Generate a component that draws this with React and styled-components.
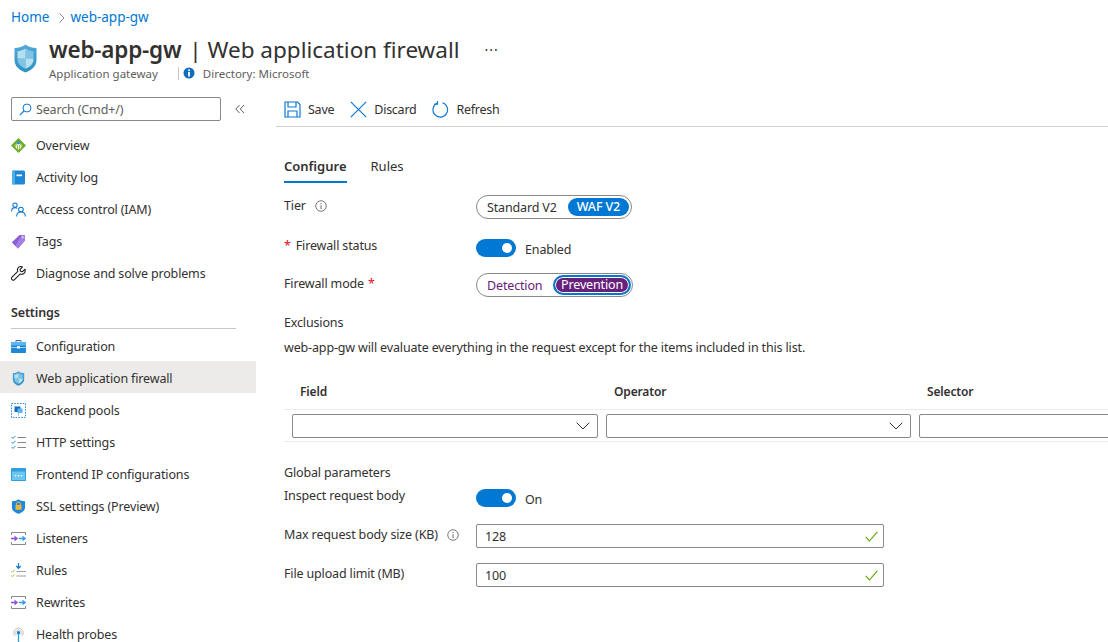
import React from "react";
import styled, { createGlobalStyle } from "styled-components";

const GlobalStyle = createGlobalStyle`
  * { box-sizing: border-box; }
  html, body { margin: 0; padding: 0; background: #fff; }
  body {
    width: 1108px;
    height: 642px;
    overflow: hidden;
    font-family: "Noto Sans", "Open Sans", Arial, sans-serif;
    font-size: 12.5px;
    letter-spacing: -0.15px;
    color: #323130;
  }
`;

const Page = styled.div`
  width: 1108px;
  height: 642px;
  overflow: hidden;
  display: flex;
  flex-direction: column;
`;

const Breadcrumb = styled.div`
  height: 35px;
  padding: 9px 0 0 11px;
  display: flex;
  align-items: flex-start;
  font-size: 13.5px;
  line-height: 17px;
  letter-spacing: 0;
  color: #0078d4;
`;
const Crumb = styled.span`
  color: #0078d4;
`;
const CrumbSep = styled.svg`
  width: 8px;
  height: 10px;
  margin: 4px 4px 0 9px;
`;

const Header = styled.div`
  height: 53px;
  padding-left: 14px;
  display: flex;
  align-items: flex-start;
`;
const HeaderIcon = styled.svg`
  width: 23px;
  height: 29px;
  margin: 9px 12px 0 0;
  flex: none;
`;
const TitleBlock = styled.div`
  display: flex;
  flex-direction: column;
`;
const TitleRow = styled.div`
  display: flex;
  align-items: flex-start;
`;
const Title = styled.h1`
  margin: 0;
  font-size: 22.5px;
  line-height: 30px;
  font-weight: 400;
  letter-spacing: 0;
  color: #323130;
  white-space: nowrap;
  b {
    font-weight: 600;
    letter-spacing: -0.2px;
    margin-right: 2px;
  }
`;
const More = styled.span`
  margin: 3px 0 0 25px;
  font-size: 14px;
  line-height: 24px;
  letter-spacing: 1px;
  color: #323130;
`;
const Sub = styled.div`
  display: flex;
  align-items: center;
  height: 16px;
  font-size: 11.5px;
  letter-spacing: 0;
  color: #605e5c;
`;
const SubDivider = styled.span`
  width: 1px;
  height: 13px;
  background: #c8c6c4;
  margin: 0 4px 0 20px;
`;
const InfoDot = styled.svg`
  width: 12px;
  height: 12px;
  margin: 0 8px 0 0;
`;

const Body = styled.div`
  flex: 1;
  display: flex;
  min-height: 0;
`;

const Sidebar = styled.aside`
  width: 256px;
  flex: none;
  margin-right: 20px;
  display: flex;
  flex-direction: column;
`;
const SearchRow = styled.div`
  display: flex;
  flex: none;
  align-items: center;
  height: 24px;
  margin: 9px 0 8px 11px;
`;
const SearchBox = styled.div`
  width: 210px;
  height: 24px;
  border: 1px solid #8a8886;
  border-radius: 2px;
  display: flex;
  align-items: center;
  padding-left: 7px;
  color: #605e5c;
  svg {
    width: 13px;
    height: 13px;
    margin-right: 4px;
  }
`;
const Collapse = styled.svg`
  width: 10px;
  height: 10px;
  margin-left: 14px;
`;
const NavItem = styled.div`
  flex: none;
  height: 32px;
  padding: ${(p) => (p.$low ? 3 : 1)}px 0 0 11px;
  display: flex;
  align-items: center;
  background: ${(p) => (p.$active ? "#edebe9" : "transparent")};
  color: #323130;
  white-space: nowrap;
  svg {
    width: 15px;
    height: 15px;
    margin-right: 10px;
    flex: none;
  }
`;
const NavHeading = styled.div`
  flex: none;
  margin: 15px 20px 0 11px;
  height: 25px;
  line-height: 18px;
  font-weight: 600;
  border-bottom: 1px solid #c8c6c4;
`;

const Main = styled.main`
  flex: 1;
  min-width: 0;
  display: flex;
  flex-direction: column;
`;
const Toolbar = styled.div`
  height: 39px;
  padding: 0 0 0 8px;
  border-bottom: 1px solid #d2d0ce;
  display: flex;
  align-items: flex-start;
  letter-spacing: -0.25px;
`;
const ToolButton = styled.div`
  display: flex;
  align-items: center;
  height: 24px;
  margin: 9px 16px 0 0;
  color: #323130;
  svg {
    width: 17px;
    height: 17px;
    margin-right: 7px;
  }
`;
const Content = styled.div`
  padding: 26px 0 0 8px;
`;
const Tabs = styled.div`
  display: flex;
  gap: 24px;
  height: 30px;
`;
const Tab = styled.div`
  height: 30px;
  line-height: 26px;
  font-size: 13px;
  letter-spacing: 0;
  font-weight: ${(p) => (p.$active ? 600 : 400)};
  border-bottom: ${(p) => (p.$active ? "2px solid #0078d4" : "none")};
  color: #323130;
`;
const FormRow = styled.div`
  display: grid;
  grid-template-columns: 192px 1fr;
  height: ${(p) => p.$h}px;
  margin-top: ${(p) => p.$mt || 0}px;
`;
const Label = styled.div`
  display: flex;
  align-items: flex-start;
  line-height: 18px;
  margin-top: ${(p) => p.$mt || 0}px;
  white-space: nowrap;
  svg {
    width: 12px;
    height: 12px;
    margin: 3px 0 0 9px;
  }
`;
const Req = styled.span`
  color: #e00b1c;
  margin: ${(p) => (p.$before ? "0 5px 0 0" : "0 0 0 4px")};
`;
const Segmented = styled.div`
  display: inline-flex;
  align-items: center;
  width: ${(p) => p.$w}px;
  height: 24px;
  border: 1px solid #8a8886;
  border-radius: 12px;
  padding: 0 1px 0 10px;
  justify-content: space-between;
  color: ${(p) => p.$color};
`;
const SegActive = styled.span`
  height: 18px;
  line-height: 17px;
  padding: 0 9px;
  margin-right: 1px;
  border-radius: 9px;
  background: #0078d4;
  color: #fff;
  font-weight: 500;
`;
const SegFocused = styled.span`
  height: 20px;
  line-height: 16px;
  padding: 0 6px;
  border-radius: 10px;
  background: #68217a;
  color: #fff;
  border: 2px solid #0078d4;
  box-shadow: inset 0 0 0 1px #fff;
`;
const ToggleWrap = styled.div`
  display: flex;
  align-items: flex-start;
`;
const Toggle = styled.span`
  width: 40px;
  height: 18px;
  border-radius: 9px;
  background: #0078d4;
  display: flex;
  align-items: center;
  justify-content: flex-end;
  padding-right: 4px;
  &::after {
    content: "";
    width: 10px;
    height: 10px;
    border-radius: 50%;
    background: #fff;
  }
`;
const ToggleText = styled.span`
  margin: 2px 0 0 9px;
  line-height: 18px;
`;
const SectionTitle = styled.div`
  line-height: 18px;
  margin-top: ${(p) => p.$mt}px;
`;
const Desc = styled.div`
  line-height: 18px;
  margin-top: 7px;
  white-space: nowrap;
`;
const ColHeads = styled.div`
  display: grid;
  grid-template-columns: 314px 313px 1fr;
  height: 27px;
  margin-top: 26px;
  padding: 0 0 0 16px;
  font-weight: 600;
  font-size: 12px;
  line-height: 18px;
  border-bottom: 1px solid #edebe9;
  white-space: nowrap;
`;
const FilterRow = styled.div`
  display: flex;
  gap: 8px;
  height: 32px;
  padding: 4px 0 0 8px;
  border-bottom: 1px solid #edebe9;
  overflow: hidden;
`;
const Select = styled.div`
  flex: none;
  width: ${(p) => p.$w}px;
  height: 24px;
  border: 1px solid #8a8886;
  border-radius: 2px;
  display: flex;
  align-items: center;
  justify-content: flex-end;
  padding-right: 7px;
  svg {
    width: 14px;
    height: 8px;
  }
`;
const Input = styled.div`
  width: 408px;
  height: 24px;
  border: 1px solid #8a8886;
  border-radius: 2px;
  display: flex;
  align-items: center;
  justify-content: space-between;
  padding: 0 5px 0 8px;
  svg {
    width: 13px;
    height: 11px;
  }
`;

const ChevronDown = () => (
  <svg viewBox="0 0 14 8">
    <path d="M.7.7 7 7l6.3-6.3" fill="none" stroke="#323130" strokeWidth="1" />
  </svg>
);

const Check = () => (
  <svg viewBox="0 0 13 11">
    <path d="M.8 5.8 4.4 10 12.3.8" fill="none" stroke="#57a300" strokeWidth="1.1" />
  </svg>
);

const InfoCircle = () => (
  <svg viewBox="0 0 13 13">
    <circle cx="6.5" cy="6.5" r="5.7" fill="none" stroke="#605e5c" strokeWidth=".9" />
    <circle cx="6.5" cy="3.9" r=".75" fill="#605e5c" />
    <path d="M6.5 5.7v4.2" stroke="#605e5c" strokeWidth="1" />
  </svg>
);

const ShieldBase = ({ id }) => (
  <>
    <defs>
      <linearGradient id={id} x1="0" y1="0" x2="0" y2="1">
        <stop offset="0" stopColor="#4fa9d9" />
        <stop offset="1" stopColor="#2f8fc4" />
      </linearGradient>
    </defs>
    <path d="M11.5.5C14 2.6 17.8 3.900 22.5 4v12c0 6.300-5 10.300-11 12.500C5.500 26.300.5 22.300.5 16V4C5.200 3.900 9 2.600 11.500.5z" fill={`url(#${id})`} />
    <path d="M11.500 4.500C13.800 6 16.500 7 19.500 7.300v7.200h-8zM11.500 14.500v10.300C7.500 23 3.500 20.300 3.500 15.500v-1z" fill="#7fc4e4" />
    <path d="M11.500 4.500v10h-8V7.300C6.500 7 9.200 6 11.500 4.500zM11.500 14.500h8v1c0 4.800-4 7.500-8 9.300z" fill="#b6dff0" />
  </>
);

const OverviewIcon = () => (
  <svg viewBox="0 0 15 15">
    <path d="M7.500 0 15 7.500 7.500 15 0 7.500z" fill="#6fa92c" />
    <path d="M7.500 3 12 7.500 7.500 12 3 7.500z" fill="#9ccb50" />
    <path d="M7.500 5v6.500M5.300 10.500V7.500L7.500 5.500l2.200 2v3" fill="none" stroke="#fff" strokeWidth="1" />
    <circle cx="7.500" cy="4.800" r="1.600" fill="#2f8fd8" />
  </svg>
);
const ActivityIcon = () => (
  <svg viewBox="0 0 15 15">
    <rect x="1" y=".5" width="13" height="14" rx="1.500" fill="#1e88d6" />
    <rect x="1" y=".5" width="3" height="14" rx="1" fill="#50b0ec" />
    <rect x="5.500" y="4.500" width="5.500" height="1.700" fill="#fff" />
  </svg>
);
const AccessIcon = () => (
  <svg viewBox="0 0 16 16">
    <g fill="none" stroke="#0f78d4" strokeWidth="1.100">
      <circle cx="4.300" cy="3.300" r="2.300" />
      <path d="M.6 10c0-2.500 1.500-4 3.700-4 1 0 1.800.3 2.400.8" />
      <circle cx="10.600" cy="8" r="2.500" />
      <path d="M6 15.500c0-3 2-4.800 4.600-4.800s4.700 1.800 4.700 4.800" />
    </g>
  </svg>
);
const TagIcon = () => (
  <svg viewBox="0 0 15 15">
    <path d="M8.500 1H14v5.500L7 14.500.8 8.500z" fill="#8a5cd6" />
    <path d="M10.500 1H14v5.500L7 14.500 4.500 12z" fill="#a67fe4" />
    <circle cx="11.700" cy="3.300" r="1" fill="#e6dcfa" />
  </svg>
);
const WrenchIcon = () => (
  <svg viewBox="0 0 15 15">
    <path
      d="M14 3.200 11.500 5.600 9.500 5.200 9 3.300 11.500.9C9.500.2 7.700.8 6.900 2.200c-.6 1-.6 2.200-.1 3.200L1 11.200c-.7.700-.7 1.800 0 2.500s1.800.7 2.500 0l5.800-5.800c1 .5 2.300.4 3.300-.2 1.300-.9 1.900-2.700 1.400-4.500z"
      fill="none"
      stroke="#201f1e"
      strokeWidth="1.100"
      strokeLinejoin="round"
    />
  </svg>
);
const ConfigIcon = () => (
  <svg viewBox="0 0 15 15">
    <path d="M5 3V1.500h5V3" fill="none" stroke="#3a6f9e" strokeWidth="1" />
    <rect x="0" y="3" width="15" height="11" rx=".8" fill="#1e88d6" />
    <rect x="0" y="3" width="15" height="3.500" fill="#5cb5ee" />
    <rect x="0" y="8" width="15" height=".8" fill="#c6e4f8" />
    <rect x="6" y="7.200" width="3" height="2.300" fill="#fff" />
  </svg>
);
const WafIcon = () => (
  <svg viewBox="0 0 23 29">
    <ShieldBase id="wafNav" />
  </svg>
);
const BackendIcon = () => (
  <svg viewBox="0 0 15 15">
    <rect x=".5" y=".5" width="14" height="14" fill="none" stroke="#2f8fd8" strokeWidth="1" strokeDasharray="1.600 1.200" />
    <rect x="3.500" y="3.500" width="6" height="5.500" fill="#0f6cc0" />
    <rect x="6.500" y="5.500" width="5" height="4.500" fill="#5cb5ee" />
    <path d="M7.500 10.500v2" stroke="#5cb5ee" strokeWidth="1" />
  </svg>
);
const HttpIcon = () => (
  <svg viewBox="0 0 15 15">
    <path d="M.5 2 2 3.500 4.500.8M.5 7l1.500 1.500L4.500 5.800M.5 12l1.500 1.500 2.500-2.700" fill="none" stroke="#2f8fd8" strokeWidth="1" />
    <path d="M6.500 2.500H15M6.500 7.500H15M6.500 12.500H15" stroke="#8a8886" strokeWidth="1" />
  </svg>
);
const FrontendIcon = () => (
  <svg viewBox="0 0 15 15">
    <rect x="0" y="1" width="15" height="13" rx=".8" fill="#2f9fe0" />
    <rect x="1" y="4.500" width="13" height="8.500" fill="#6cc6f0" />
    <circle cx="4.500" cy="8.700" r=".8" fill="#fff" />
    <circle cx="7.500" cy="8.700" r=".8" fill="#fff" />
    <circle cx="10.500" cy="8.700" r=".8" fill="#fff" />
  </svg>
);
const SslIcon = () => (
  <svg viewBox="0 0 15 16">
    <path d="M7.500.3C9 1.500 11.500 2.300 14.500 2.500v6.500c0 3.500-3.200 5.600-7 6.800C3.700 14.600.5 12.500.5 9V2.500C3.500 2.300 6 1.500 7.500.3z" fill="#1e88e0" />
    <path d="M5.500 6.500V5.200a2 2 0 0 1 4 0v1.300" fill="none" stroke="#f5c542" strokeWidth="1" />
    <rect x="4.300" y="6.500" width="6.400" height="5" rx=".5" fill="#f2b632" />
  </svg>
);
const ListenerIcon = () => (
  <svg viewBox="0 0 15 15">
    <path d="M.5 4V1.500h14V4M.5 11v2.500h14V11" fill="none" stroke="#8a8886" strokeWidth="1" />
    <path d="M0 7.500h5M3.500 5.500l2.500 2-2.500 2" fill="none" stroke="#8a4fe0" strokeWidth="1.500" />
    <path d="M8 7.500h5M11.500 5.500l2.500 2-2.500 2" fill="none" stroke="#2f9fe8" strokeWidth="1.500" />
  </svg>
);
const RulesIcon = () => (
  <svg viewBox="0 0 15 15">
    <path d="M7.500 0v5M5.300 3l2.200 2.400L9.700 3" fill="none" stroke="#0f78d4" strokeWidth="1.200" />
    <path d="M.5 8l1 1.200L3.500 7M.5 12.500l1 1.200 2-2.200" fill="none" stroke="#9ac83c" strokeWidth="1" />
    <path d="M5.500 8.500H15M5.500 13H15" stroke="#a19f9d" strokeWidth="1.100" />
  </svg>
);
const ProbeIcon = () => (
  <svg viewBox="0 0 15 16">
    <g fill="none" stroke="#b5b3b1" strokeWidth=".9">
      <path d="M3.800 9.500a5 5 0 1 1 7.400 0" />
      <path d="M5.300 8.200a3 3 0 1 1 4.400 0" />
    </g>
    <circle cx="7.500" cy="6" r="1.700" fill="#0f78d4" />
    <rect x="6.800" y="7" width="1.400" height="9" fill="#2f9fe0" />
  </svg>
);

const topNav = [
  { label: "Overview", icon: OverviewIcon },
  { label: "Activity log", icon: ActivityIcon },
  { label: "Access control (IAM)", icon: AccessIcon },
  { label: "Tags", icon: TagIcon },
  { label: "Diagnose and solve problems", icon: WrenchIcon },
];

const settingsNav = [
  { label: "Configuration", icon: ConfigIcon },
  { label: "Web application firewall", icon: WafIcon, active: true },
  { label: "Backend pools", icon: BackendIcon },
  { label: "HTTP settings", icon: HttpIcon },
  { label: "Frontend IP configurations", icon: FrontendIcon },
  { label: "SSL settings (Preview)", icon: SslIcon },
  { label: "Listeners", icon: ListenerIcon },
  { label: "Rules", icon: RulesIcon },
  { label: "Rewrites", icon: ListenerIcon },
  { label: "Health probes", icon: ProbeIcon },
];

const App = () => (
  <Page>
    <GlobalStyle />
    <Breadcrumb>
      <Crumb>Home</Crumb>
      <CrumbSep viewBox="0 0 8 10">
        <path d="M1.500.5 6 5 1.500 9.500" fill="none" stroke="#8a8886" strokeWidth="1" />
      </CrumbSep>
      <Crumb>web-app-gw</Crumb>
    </Breadcrumb>
    <Header>
      <HeaderIcon viewBox="0 0 23 29">
        <ShieldBase id="wafHead" />
      </HeaderIcon>
      <TitleBlock>
        <TitleRow>
          <Title>
            <b>web-app-gw</b> | Web application firewall
          </Title>
          <More>···</More>
        </TitleRow>
        <Sub>
          <span>Application gateway</span>
          <SubDivider />
          <InfoDot viewBox="0 0 12 12">
            <circle cx="6" cy="6" r="5.500" fill="#0f6cbd" />
            <circle cx="6" cy="3.300" r="1" fill="#fff" />
            <rect x="5.100" y="5" width="1.800" height="4.500" fill="#fff" />
          </InfoDot>
          <span>Directory: Microsoft</span>
        </Sub>
      </TitleBlock>
    </Header>
    <Body>
      <Sidebar>
        <SearchRow>
          <SearchBox>
            <svg viewBox="0 0 13 13">
              <circle cx="8" cy="5" r="4" fill="none" stroke="#0f78d4" strokeWidth="1" />
              <path d="M5 8 .8 12.200" stroke="#0f78d4" strokeWidth="1.100" />
            </svg>
            Search (Cmd+/)
          </SearchBox>
          <Collapse viewBox="0 0 10 10">
            <path d="M4.500 1 .8 5l3.700 4M9 1 5.300 5 9 9" fill="none" stroke="#605e5c" strokeWidth="1" />
          </Collapse>
        </SearchRow>
        {topNav.map(({ label, icon: Icon }) => (
          <NavItem key={label}>
            <Icon />
            {label}
          </NavItem>
        ))}
        <NavHeading>Settings</NavHeading>
        {settingsNav.map(({ label, icon: Icon, active }) => (
          <NavItem key={label} $active={active} $low>
            <Icon />
            {label}
          </NavItem>
        ))}
      </Sidebar>
      <Main>
        <Toolbar>
          <ToolButton>
            <svg viewBox="0 0 17 17">
              <path d="M1 1h12.500L16 3.500V16H1z" fill="none" stroke="#0f78d4" strokeWidth="1.200" />
              <path d="M4 1v5h8V1M4 16v-6h9v6" fill="none" stroke="#0f78d4" strokeWidth="1.200" />
            </svg>
            Save
          </ToolButton>
          <ToolButton>
            <svg viewBox="0 0 17 17">
              <path d="m.8.8 15.400 15.400M16.200.8.8 16.200" stroke="#0f78d4" strokeWidth="1.200" />
            </svg>
            Discard
          </ToolButton>
          <ToolButton>
            <svg viewBox="0 0 17 17">
              <path d="M10.500 1.800a7.300 7.300 0 1 1-5 .2" fill="none" stroke="#0f78d4" strokeWidth="1.200" />
              <path d="M5.500 0v3.200H2.300" fill="none" stroke="#0f78d4" strokeWidth="1.200" />
            </svg>
            Refresh
          </ToolButton>
        </Toolbar>
        <Content>
          <Tabs>
            <Tab $active>Configure</Tab>
            <Tab>Rules</Tab>
          </Tabs>
          <FormRow $h={24} $mt={12}>
            <Label $mt={2}>
              Tier
              <InfoCircle />
            </Label>
            <div>
              <Segmented $w={156} $color="#323130">
                Standard V2
                <SegActive>WAF V2</SegActive>
              </Segmented>
            </div>
          </FormRow>
          <FormRow $h={18} $mt={20}>
            <Label $mt={-2}>
              <Req $before>*</Req>
              Firewall status
            </Label>
            <ToggleWrap>
              <Toggle />
              <ToggleText>Enabled</ToggleText>
            </ToggleWrap>
          </FormRow>
          <FormRow $h={24} $mt={16}>
            <Label $mt={2}>
              Firewall mode
              <Req>*</Req>
            </Label>
            <div>
              <Segmented $w={157} $color="#68217a">
                Detection
                <SegFocused>Prevention</SegFocused>
              </Segmented>
            </div>
          </FormRow>
          <SectionTitle $mt={17}>Exclusions</SectionTitle>
          <Desc>web-app-gw will evaluate everything in the request except for the items included in this list.</Desc>
          <ColHeads>
            <span>Field</span>
            <span>Operator</span>
            <span>Selector</span>
          </ColHeads>
          <FilterRow>
            <Select $w={306}>
              <ChevronDown />
            </Select>
            <Select $w={305}>
              <ChevronDown />
            </Select>
            <Select $w={300} />
          </FilterRow>
          <SectionTitle $mt={22}>Global parameters</SectionTitle>
          <FormRow $h={18} $mt={7}>
            <Label $mt={-2}>Inspect request body</Label>
            <ToggleWrap>
              <Toggle />
              <ToggleText>On</ToggleText>
            </ToggleWrap>
          </FormRow>
          <FormRow $h={24} $mt={17}>
            <Label $mt={2}>
              Max request body size (KB)
              <InfoCircle />
            </Label>
            <Input>
              128
              <Check />
            </Input>
          </FormRow>
          <FormRow $h={24} $mt={15}>
            <Label $mt={2}>File upload limit (MB)</Label>
            <Input>
              100
              <Check />
            </Input>
          </FormRow>
        </Content>
      </Main>
    </Body>
  </Page>
);

export default App;
